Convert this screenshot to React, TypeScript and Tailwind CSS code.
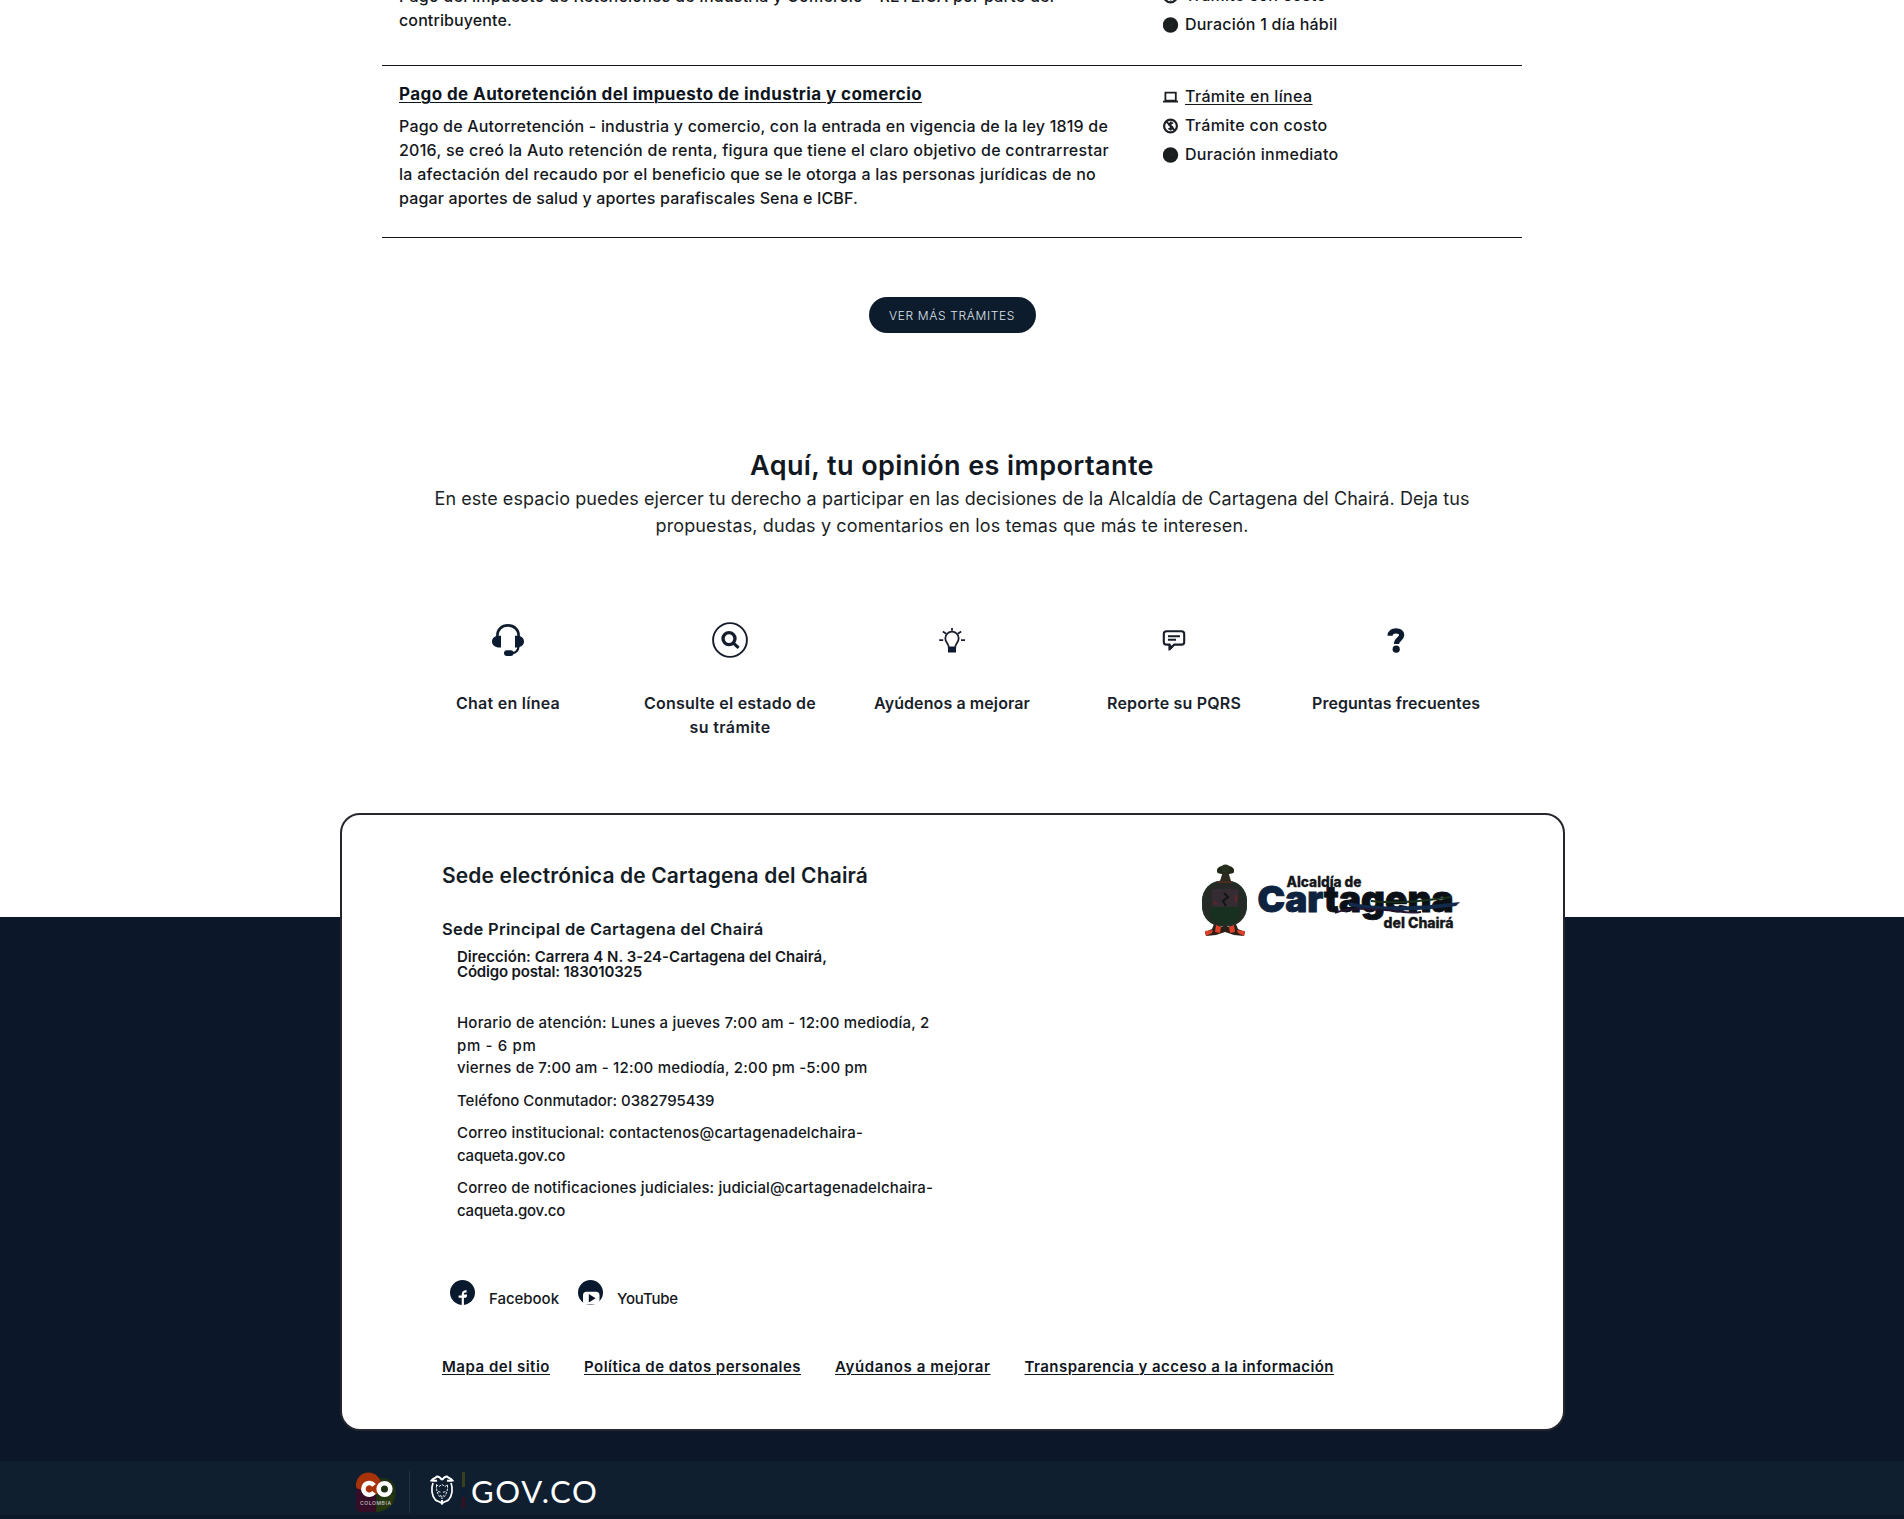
import { useLayoutEffect, useRef, useState } from "react";
import type { ReactNode } from "react";

/* A single line of text whose tracking is adjusted so that it spans `w` pixels. */
function Line({ w, className = "", children }: { w: number; className?: string; children: string }) {
  const ref = useRef<HTMLSpanElement>(null);
  const [spacing, setSpacing] = useState(0);
  useLayoutEffect(() => {
    const el = ref.current;
    if (!el) return;
    el.style.letterSpacing = "0px";
    setSpacing((w - el.getBoundingClientRect().width) / children.length);
  }, [w, children]);
  return (
    <span className="block">
      <span ref={ref} className={`inline-block whitespace-nowrap ${className}`} style={{ letterSpacing: `${spacing}px` }}>
        {children}
      </span>
    </span>
  );
}

const LaptopIcon = () => (
  <svg viewBox="0 0 16 16" className="size-4" fill="none" stroke="#1c1f24" strokeWidth="1.8">
    <path d="M2.400 3.600h10.400v8H2.400z" />
    <path d="M0 12.600h15" />
  </svg>
);

const CostIcon = () => (
  <svg viewBox="0 0 16 16" className="size-4" fill="none" stroke="#1c1f24">
    <circle cx="7.500" cy="8" r="6.400" strokeWidth="2.200" />
    <path d="M3.400 3.600l8.600 9" strokeWidth="1.800" />
    <path d="M9.900 5.600C9.300 4.600 5.900 4.400 5.900 6.200c0 1.900 3.800 1.500 3.800 3.600 0 1.800-3.400 1.800-4.200.4M7.700 3.400v9.200" strokeWidth="1.800" />
  </svg>
);

const ClockIcon = () => (
  <svg viewBox="0 0 16 16" className="size-4">
    <circle cx="7.500" cy="8" r="7.700" fill="#1c1f20" />
    <path d="M7.400 8.400l2.800-2" stroke="#2c3034" strokeWidth="1" />
  </svg>
);

function Meta({ icon, children }: { icon: ReactNode; children: ReactNode }) {
  return (
    <li className="flex h-[29px] items-center gap-[6px] leading-[29px]">
      {icon}
      {children}
    </li>
  );
}

const HeadsetIcon = () => (
  <svg viewBox="0 0 36 36" className="size-9">
    <path d="M7.400 14.500v-1.200C7.400 7.600 11.600 3.400 17.900 3.400S28.600 7.600 28.600 13.300v1.200" fill="none" stroke="#0f1c2e" strokeWidth="2.600" />
    <path d="M11 13.800v11.600H8.400C4.600 25.400 2 22.800 2 19.600s2.600-5.800 6.400-5.800zM25 13.800v11.600h2.600c3.800 0 6.400-2.600 6.400-5.800s-2.600-5.800-6.400-5.800z" fill="#0b1b30" />
    <path d="M28.400 25c-.4 4.400-2.600 6-6.800 6.200" fill="none" stroke="#0f1c2e" strokeWidth="2.300" />
    <rect x="14" y="28.200" width="9.600" height="5.800" rx="2.900" fill="#0b1b30" />
  </svg>
);

const SearchIcon = () => (
  <svg viewBox="0 0 36 36" className="size-9" fill="none" stroke="#151c2b">
    <circle cx="18" cy="18" r="16.900" strokeWidth="1.900" />
    <circle cx="17" cy="16.600" r="6" strokeWidth="3.400" />
    <path d="M21.200 20.800l5.400 5" strokeWidth="3.200" />
  </svg>
);

const BulbIcon = () => (
  <svg viewBox="0 0 36 36" className="size-9" fill="none" stroke="#1a1f30" strokeWidth="1.800">
    <path d="M14.800 25.500c0-4.200-3.500-5-3.500-9.200a6.700 6.700 0 0 1 13.400 0c0 4.200-3.500 5-3.500 9.200z" />
    <rect x="14" y="25" width="8" height="5.500" fill="#0d1a30" stroke="none" />
    <path d="M18 6v2.800M8.800 9.600l3.400 2.200M27.200 9.600l-3.400 2.200M5.200 18.200h4M27 18.200h4" />
  </svg>
);

const CommentIcon = () => (
  <svg viewBox="0 0 36 36" className="size-9" fill="none" stroke="#171c29" strokeLinejoin="round">
    <path d="M10.500 9.200h15c1.800 0 2.700.9 2.700 2.700v8c0 1.800-.9 2.700-2.700 2.700h-7.200l-4.600 4.600v-4.600h-3.200c-1.800 0-2.700-.9-2.700-2.700v-8c0-1.800.9-2.700 2.700-2.700z" strokeWidth="2.100" />
    <path d="M12 14.200h12M12 17.800h8" strokeWidth="1.900" />
    <path d="M12.600 23v6l5.400-5z" fill="#171c29" stroke="none" />
  </svg>
);

const QuestionIcon = () => (
  <svg viewBox="0 0 36 36" className="size-9">
    <path d="M12.100 13.800C12.100 10.400 14.600 8.800 18 8.800s5.700 1.500 5.700 4.200c0 4-5.200 4-5.200 9" fill="none" stroke="#0b1a2e" strokeWidth="5.200" />
    <circle cx="18.200" cy="27.200" r="3.600" fill="#0f1a28" />
  </svg>
);

const shortcuts = [
  { icon: <HeadsetIcon />, lines: [["Chat en línea", 104]] },
  { icon: <SearchIcon />, lines: [["Consulte el estado de", 172], ["su trámite", 81]] },
  { icon: <BulbIcon />, lines: [["Ayúdenos a mejorar", 156]] },
  { icon: <CommentIcon />, lines: [["Reporte su PQRS", 134]] },
  { icon: <QuestionIcon />, lines: [["Preguntas frecuentes", 168]] },
] as { icon: ReactNode; lines: [string, number][] }[];

const TownLogo = () => (
  <svg viewBox="0 0 262 76" className="h-[76px] w-[262px]">
    <g>
      <ellipse cx="24.500" cy="6" rx="8.500" ry="4.500" fill="#202818" />
      <circle cx="24.500" cy="4.500" r="4" fill="#283020" />
      <circle cx="18.500" cy="7" r="2.500" fill="#202818" />
      <circle cx="30.500" cy="7" r="2.500" fill="#202818" />
      <path d="M21.500 9h6l2.500 8H19z" fill="#2d2b20" />
      <rect x="1" y="16.500" width="45" height="46" rx="20" fill="#262a26" />
      <rect x="2" y="17.500" width="43" height="44" rx="19.500" fill="none" stroke="#1f3324" strokeWidth="1.500" />
      <path d="M11 25h26v18H11z" fill="#352c33" />
      <path d="M9 43h30v6c0 7-7 11-15 11S9 56 9 49z" fill="#17301f" />
      <path d="M23 29l4 4-5 4 3 5" fill="none" stroke="#141414" strokeWidth="2" />
      <path d="M35 31v7M13 38l3 2" stroke="#6d2029" strokeWidth="1.800" />
      <path d="M17 18h14" stroke="#6e2a20" strokeWidth="1.200" />
      <path d="M13 60l8 3 3-2 3 2 8-3 2 5 7 3-1 4-10-1-9-3-9 3-10 1-1-4 7-3z" fill="#2b2118" />
      <path d="M15 61l5 2-1 6-5-1zM33 61l-5 2 1 6 5-1zM4 67l8-1-1 3-6 3zM44 67l-8-1 1 3 6 3z" fill="#e0402a" />
    </g>
    <g fontFamily="Inter, sans-serif">
      <text x="85.500" y="22.500" fontSize="14" fontWeight="800" fill="#15171b" stroke="#15171b" strokeWidth="0.300" textLength="75" lengthAdjust="spacingAndGlyphs">Alcaldía de</text>
      <text x="56.500" y="47.500" fontSize="36" fontWeight="900" fill="#0b0f16" stroke="#0b0f16" strokeWidth="0.900" textLength="196" lengthAdjust="spacingAndGlyphs">
        <tspan fill="#0d2340" stroke="#0d2340">Car</tspan>tagena
      </text>
      <path d="M170 37c20 2 40 2 80-4" fill="none" stroke="#17301a" strokeWidth="1.800" />
      <path d="M148 38c24 6 60 6 111 0l-4 4c-40 6-80 6-107 0z" fill="#11294a" />
      <path d="M134 49c14-6 34-4 50-3s22 4 36 2" fill="none" stroke="#241430" strokeWidth="1.800" />
      <text x="182.500" y="63.500" fontSize="14" fontWeight="800" fill="#15171b" stroke="#15171b" strokeWidth="0.300" textLength="70" lengthAdjust="spacingAndGlyphs">del Chairá</text>
    </g>
  </svg>
);

const FacebookBadge = () => (
  <svg viewBox="0 0 25 25" className="size-[25px]">
    <circle cx="12.500" cy="12.500" r="12.500" fill="#0a1a2e" />
    <path d="M12.800 25v-9.400h4.200M8.600 16.600h7.600M12.800 16v-1.600c0-2.200 1.100-3.200 3.800-3" fill="none" stroke="#fff" strokeWidth="2.200" />
  </svg>
);

const YoutubeBadge = () => (
  <svg viewBox="0 0 25 25" className="size-[25px]">
    <circle cx="12.500" cy="12.500" r="12.500" fill="#0a1a2e" />
    <rect x="5" y="11.800" width="16.500" height="12.600" rx="3.500" fill="#fff" />
    <path d="M10.800 14l6.800 4.200-6.800 4.200z" fill="#0a1422" />
  </svg>
);

const ColombiaLogo = () => (
  <svg viewBox="0 0 42 42" className="size-[42px]">
    <path d="M22 7h6c8 0 13 6 13 14 0 12-8 20-20 20h-4z" fill="#1d3014" />
    <circle cx="13.500" cy="14" r="12.500" fill="#a8320a" />
    <path d="M1 17v18c0 4 2 6 6 6h14V24z" fill="#360d26" />
    <path d="M25 24h14c-1 9-8 16-18 17z" fill="#26380f" />
    <g fill="none" stroke="#fff" strokeWidth="4.600">
      <path d="M19 14.400a5.900 5.900 0 1 0 0 7" />
      <circle cx="29.500" cy="18" r="5.800" />
    </g>
    <text x="5" y="33.500" fontSize="5" fontFamily="Inter, sans-serif" fontWeight="500" fill="#c9c4c9" textLength="31">COLOMBIA</text>
  </svg>
);

const CoatOfArms = () => (
  <svg viewBox="0 0 24 30" className="h-[30px] w-6" fill="none" stroke="#fff">
    <path d="M12 5c-2-3-3.500-3.500-5-3.500C5.500 3 3 3.500 1.500 5.500c2.500.5 4 .5 5.500 0M12 5c2-3 3.500-3.500 5-3.500C18.500 3 21 3.500 22.500 5.500c-2.500.5-4 .5-5.500 0" strokeWidth="2" />
    <path d="M3 8c-2 5-1.500 13 2.500 17 2 1.500 4 1 6.500 3.500 2.500-2.500 4.500-2 6.500-3.500C22.500 21 23 13 21 8" strokeWidth="1.700" />
    <path d="M6 9.500l3 2 3-2 3 2 3-2M6.500 10c-.5 6 1.500 11 5.500 13.500 4-2.500 6-7.500 5.500-13.500M8 16.500l3 .8M13 17.300l3-.8M10 20.500l2 1 2-1" strokeWidth=".9" strokeDasharray="2.500 1" />
    <path d="M12 25v4.500" strokeWidth="2" />
  </svg>
);

const footerLinks: [string, number][] = [
  ["Mapa del sitio", 108],
  ["Política de datos personales", 217],
  ["Ayúdanos a mejorar", 155.5],
  ["Transparencia y acceso a la información", 309.5],
];

export default function App() {
  return (
    <div className="flex h-[1519px] w-[1904px] flex-col overflow-hidden bg-white font-['Inter',sans-serif] text-base text-[#14171c]">
      <main className="flex h-[739px] shrink-0 flex-col items-center">
        <article className="flex h-[66px] w-[1140px] shrink-0 items-end justify-between border-b border-[#14141c] pl-[17px]">
          <div className="pb-[33px] font-medium leading-6">
            <Line w={655}>Pago del impuesto de Retenciones de Industria y Comercio - RETEICA por parte del</Line>
            <Line w={113}>contribuyente.</Line>
          </div>
          <ul className="w-[359px] pb-[26px] font-medium">
            <Meta icon={<CostIcon />}><Line w={141.5}>Trámite con costo</Line></Meta>
            <Meta icon={<ClockIcon />}><Line w={152.5}>Duración 1 día hábil</Line></Meta>
          </ul>
        </article>

        <article className="flex h-[172px] w-[1140px] shrink-0 justify-between border-b border-[#14141c] pl-[17px] pt-4">
          <div className="font-medium leading-6">
            <h3 className="mb-2 text-[17px] font-bold text-[#0e1420]">
              <Line w={523} className="underline decoration-1 underline-offset-2">Pago de Autoretención del impuesto de industria y comercio</Line>
            </h3>
            <Line w={709}>Pago de Autorretención - industria y comercio, con la entrada en vigencia de la ley 1819 de</Line>
            <Line w={710}>2016, se creó la Auto retención de renta, figura que tiene el claro objetivo de contrarrestar</Line>
            <Line w={697}>la afectación del recaudo por el beneficio que se le otorga a las personas jurídicas de no</Line>
            <Line w={459}>pagar aportes de salud y aportes parafiscales Sena e ICBF.</Line>
          </div>
          <ul className="w-[359px] font-medium">
            <Meta icon={<LaptopIcon />}><Line w={127.5} className="underline decoration-1 underline-offset-2">Trámite en línea</Line></Meta>
            <Meta icon={<CostIcon />}><Line w={142.5}>Trámite con costo</Line></Meta>
            <Meta icon={<ClockIcon />}><Line w={153.5}>Duración inmediato</Line></Meta>
          </ul>
        </article>

        <button className="mt-[59px] flex h-9 w-[167px] shrink-0 items-center justify-center rounded-full bg-[#0d1c2d] pt-[2px] text-xs font-light text-[#dfe3ea]">
          <Line w={126}>VER MÁS TRÁMITES</Line>
        </button>

        <section className="mt-[117px] flex flex-col items-center">
          <h2 className="text-[27px] font-semibold leading-8 text-[#111822]">
            <Line w={404}>Aquí, tu opinión es importante</Line>
          </h2>
          <p className="mt-[3px] text-center text-[18px] leading-[27px] text-[#1b1f26]">
            <Line w={1035}>En este espacio puedes ejercer tu derecho a participar en las decisiones de la Alcaldía de Cartagena del Chairá. Deja tus</Line>
            <Line w={593}>propuestas, dudas y comentarios en los temas que más te interesen.</Line>
          </p>
          <nav className="mt-[83px] grid w-[1110px] grid-cols-5">
            {shortcuts.map(({ icon, lines }) => (
              <a key={lines[0][0]} className="flex flex-col items-center text-center font-semibold leading-6 text-[#1a1f2b]">
                {icon}
                <span className="mt-[33px]">
                  {lines.map(([text, w]) => <Line key={text} w={w}>{text}</Line>)}
                </span>
              </a>
            ))}
          </nav>
        </section>
      </main>

      <footer className="flex grow flex-col items-center bg-[linear-gradient(to_bottom,#fff_178px,#0c1829_178px)] pt-[74px]">
        <section className="h-[618px] w-[1225px] shrink-0 rounded-[20px] border-2 border-[#26262f] bg-white pl-[100.5px]">
          <div className="flex justify-between pr-[100px] pt-[49px]">
            <div className="text-[15px] font-medium leading-[22.5px]">
              <h2 className="text-[21px] font-semibold leading-6 text-[#141c26]"><Line w={426}>Sede electrónica de Cartagena del Chairá</Line></h2>
              <h3 className="mt-[29px] text-[16.5px] font-semibold leading-6 text-[#141c26]"><Line w={321.5}>Sede Principal de Cartagena del Chairá</Line></h3>
              <div className="pl-[15px]">
                <address className="mt-2 font-semibold not-italic leading-[15px]">
                  <Line w={370}>Dirección: Carrera 4 N. 3-24-Cartagena del Chairá,</Line>
                  <Line w={185}>Código postal: 183010325</Line>
                </address>
                <div className="mt-[33px]">
                  <Line w={472.5}>Horario de atención: Lunes a jueves 7:00 am - 12:00 mediodía, 2</Line>
                  <Line w={79.5}>pm - 6 pm</Line>
                  <Line w={410.5}>viernes de 7:00 am - 12:00 mediodía, 2:00 pm -5:00 pm</Line>
                </div>
                <div className="mt-[10px]"><Line w={257.5}>Teléfono Conmutador: 0382795439</Line></div>
                <div className="mt-[10px]">
                  <Line w={406}>Correo institucional: contactenos@cartagenadelchaira-</Line>
                  <Line w={108}>caqueta.gov.co</Line>
                </div>
                <div className="mt-[10px]">
                  <Line w={476}>Correo de notificaciones judiciales: judicial@cartagenadelchaira-</Line>
                  <Line w={108}>caqueta.gov.co</Line>
                </div>
              </div>
            </div>
            <TownLogo />
          </div>
          <div className="mt-[58px] flex items-start pl-2 text-[15px] font-medium leading-[22.5px]">
            <FacebookBadge />
            <div className="ml-[14px] mt-2"><Line w={70}>Facebook</Line></div>
            <div className="ml-[19px]"><YoutubeBadge /></div>
            <div className="ml-[14px] mt-2"><Line w={61}>YouTube</Line></div>
          </div>
          <nav className="mt-[46px] flex gap-[34px] text-[15px] font-semibold leading-5 text-[#10161d]">
            {footerLinks.map(([text, w]) => (
              <Line key={text} w={w} className="underline decoration-1 underline-offset-2">{text}</Line>
            ))}
          </nav>
        </section>

        <div className="mt-[30px] flex h-[54px] w-full items-start bg-[#0f1f30] pl-[355px] pt-[10px]">
          <ColombiaLogo />
          <span className="ml-3 h-[42px] w-px bg-[#27323f]" />
          <span className="ml-5 mt-1"><CoatOfArms /></span>
          <span className="ml-2 mt-[1px] flex h-9 w-[3px] flex-col">
            <span className="h-[15px] bg-[#39401a]" />
            <span className="h-[10px] bg-[#0c1d38]" />
            <span className="grow bg-[#3a1020]" />
          </span>
          <span className="ml-[6px] mt-[3px] text-[31px] leading-[34px] text-white font-['Lato',sans-serif]"><Line w={127.5}>GOV.CO</Line></span>
        </div>
        <div className="w-full grow bg-[#0b1929]" />
      </footer>
    </div>
  );
}
